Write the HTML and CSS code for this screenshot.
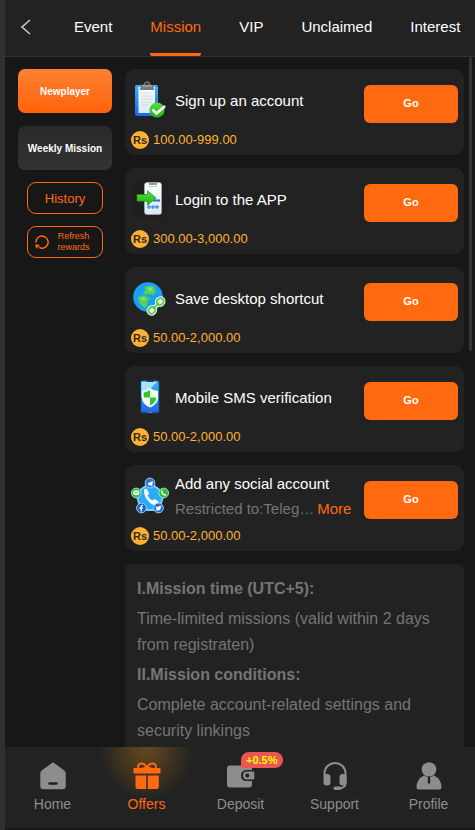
FILE: index.html
```html
<!DOCTYPE html>
<html lang="en">
<head>
<meta charset="utf-8">
<meta name="viewport" content="width=device-width, initial-scale=1">
<title>Mission</title>
<link rel="stylesheet" href="styles.css">
</head>
<body>
<svg class="defs" aria-hidden="true">
  <defs>
    <linearGradient id="board" x1="0" y1="0" x2="0" y2="1"><stop offset="0" stop-color="#35b4fb"/><stop offset="1" stop-color="#2268e8"/></linearGradient>
    <linearGradient id="green" x1="0" y1="0" x2="0" y2="1"><stop offset="0" stop-color="#59df3d"/><stop offset="1" stop-color="#20b515"/></linearGradient>
    <linearGradient id="sheet" x1="0" y1="0" x2="0" y2="1"><stop offset="0" stop-color="#ffffff"/><stop offset="1" stop-color="#dbe8f3"/></linearGradient>
  </defs>
</svg>
<header class="topbar">
  <button class="back" type="button" aria-label="Back"><svg width="12" height="18" viewBox="0 0 12 18"><path d="M10 2 2 9l8 7" fill="none" stroke="#c9c9c9" stroke-width="1.6"/></svg></button>
  <nav class="tabs">
    <a class="tab" href="#">Event</a>
    <a class="tab active" href="#">Mission</a>
    <a class="tab" href="#">VIP</a>
    <a class="tab" href="#">Unclaimed</a>
    <a class="tab" href="#">Interest</a>
  </nav>
</header>
<main class="content">
  <aside class="side">
    <button class="kind selected" type="button">Newplayer</button>
    <button class="kind" type="button">Weekly Mission</button>
    <button class="outline" type="button">History</button>
    <button class="outline refresh" type="button">
      <svg width="14" height="14" viewBox="0 0 14 14" fill="none" stroke="#ff6a10" stroke-width="1.5"><path d="M.9 7.500A6.100 6.100 0 1 1 12.300 10.200 6.100 6.100 0 0 1 4 12.300"/><path d="M.3 9.200l4.700.8L1.200 13.800z" fill="#ff6a10" stroke="none"/></svg>
      <span>Refresh rewards</span>
    </button>
  </aside>
  <section class="missions">
    <article class="card">
      <div class="detail">
        <svg class="icon" viewBox="0 0 38 38">
          <rect x="4" y="4" width="23" height="31" rx="2" fill="url(#board)"/>
          <path d="M7.500 6h16.500v26H7.500z" fill="url(#sheet)"/>
          <path d="M10 12h10M10 15h12M10 18h12M10 21h12M10 24h8" stroke="#c9d0d6" stroke-width=".8"/>
          <circle cx="16" cy="3.500" r="2.500" fill="none" stroke="#777" stroke-width="1.300"/>
          <path d="M10 5q0-1.500 2-1.500h8q2 0 2 1.500l1.500 4h-15z" fill="#747a80"/><path d="M11 5h10" stroke="#b5b9bd"/>
          <circle cx="26" cy="29" r="7.600" fill="url(#green)"/>
          <path d="m21.500 28.500 4 4L34 25" fill="none" stroke="#fff" stroke-width="2.600"/>
        </svg>
        <div class="text"><h2>Sign up an account</h2></div>
      </div>
      <button class="go" type="button">Go</button>
      <p class="reward"><span class="coin">Rs</span>100.00-999.00</p>
    </article>
    <article class="card">
      <div class="detail">
        <svg class="icon" viewBox="0 0 38 38">
          <rect width="38" height="38" rx="5" fill="#1f1f1f"/>
          <rect x="13.500" y="2.500" width="17" height="32" rx="2.500" fill="url(#sheet)" stroke="#aab2ba" stroke-width=".6"/>
          <path d="M18.500 4h7" stroke="#777" stroke-width="1.600" stroke-linecap="round"/><path d="M18 6.500h8" stroke="#bcc4ca"/>
          <path d="M22 20.500h7" stroke="#207fe4" stroke-width="2.200"/>
          <g fill="#fff" stroke="#207fe4" stroke-width="1.200"><circle cx="18" cy="27" r="1.100"/><circle cx="22" cy="27" r="1.100"/><circle cx="26" cy="27" r="1.100"/></g>
          <path d="M6 14.500h10.500v-3.800L25 18l-8.500 7v-3.800H6z" fill="url(#green)" stroke="#16890f" stroke-width=".7"/>
        </svg>
        <div class="text"><h2>Login to the APP</h2></div>
      </div>
      <button class="go" type="button">Go</button>
      <p class="reward"><span class="coin">Rs</span>300.00-3,000.00</p>
    </article>
    <article class="card">
      <div class="detail">
        <svg class="icon" viewBox="0 0 38 38">
          <circle cx="17" cy="18" r="14.800" fill="#19a0f5"/>
          <path d="M14 8q4-2 8-1 3 3 3 6l-3 3-4-1-3 1-3-2 2-3zM7 18l6-2 4 2 2 1-2 3-1 5-2 2-4-3q-3-4-3-8z" fill="#55d05a"/>
          <path d="m16 9 4-1 2 3-3 2zM9 19l4-1 2 2-2 2z" fill="#7fe070"/>
          <g transform="rotate(-46 25 27)"><g fill="#e8ffe4" stroke="#e8ffe4" stroke-width="4"><rect x="15.500" y="24" width="7" height="6" rx="3"/><rect x="27.500" y="24" width="7" height="6" rx="3"/><path d="M20 27h9"/></g><g fill="#e8ffe4" stroke="#5cc455" stroke-width="1.700"><rect x="15.500" y="24" width="7" height="6" rx="3"/><rect x="27.500" y="24" width="7" height="6" rx="3"/><path d="M21 27h8"/></g></g>
        </svg>
        <div class="text"><h2>Save desktop shortcut</h2></div>
      </div>
      <button class="go" type="button">Go</button>
      <p class="reward"><span class="coin">Rs</span>50.00-2,000.00</p>
    </article>
    <article class="card">
      <div class="detail">
        <svg class="icon" viewBox="0 0 38 38">
          <rect x="9.500" y="2" width="19" height="33.500" rx="2.500" fill="#1a4577"/>
          <rect x="10.300" y="3.500" width="17.400" height="30.500" rx="1" fill="url(#board)"/>
          <path d="M10.300 3.500h16L10.300 20z" fill="#a8e4ff"/><path d="M15.500 3h7" stroke="#243849" stroke-width="2"/><path d="M16.500 34.500h5" stroke="#5a7faf"/>
          <path d="M19 10q4 3 8 3v7q0 6-8 9.500-8-3.500-8-9.500v-7q4 0 8-3z" fill="#f5fff1"/>
          <path d="M19 12v7.500h-6.300v-5q3.300-.3 6.300-2.500zM19 19.500h6.300q0 5-6.300 8z" fill="#35c824"/>
        </svg>
        <div class="text"><h2>Mobile SMS verification</h2></div>
      </div>
      <button class="go" type="button">Go</button>
      <p class="reward"><span class="coin">Rs</span>50.00-2,000.00</p>
    </article>
    <article class="card">
      <div class="detail">
        <svg class="icon" viewBox="0 0 38 38">
          <path d="m19 6 14 10-5 17H10L5 16z" fill="#27aaf7" stroke="#75cfff" stroke-width="2" stroke-linejoin="round"/>
          <path d="M13 13q1-2 3-1l2 4q0 1.500-1.500 2.500 2 4 5 5 1.500-2 3-1l3 2q1 2-1 3-3 2-8-2-6-6-5.500-12.500z" fill="#fff"/>
          <g stroke="#b8e5ff" stroke-width=".8"><circle cx="19" cy="6" r="4.900" fill="#2377da"/><circle cx="5.300" cy="16" r="4.900" fill="#32bf31"/><circle cx="32.700" cy="16" r="4.900" fill="#32bf31"/><circle cx="10.500" cy="31" r="4.900" fill="#235fd2"/><circle cx="27.500" cy="31" r="4.900" fill="#2367d7"/></g>
          <path d="m16 6.500 6-2.500-1 5.500-2-1.500-1.500 1V7z" fill="#fff"/>
          <ellipse cx="5.300" cy="15.700" rx="3.200" ry="2.500" fill="#fff"/><path d="M3.500 15.700h3.600" stroke="#32bf31" stroke-width=".8"/>
          <path d="M31 14q-.5 3.500 3.500 4" fill="none" stroke="#fff" stroke-width="1.500" stroke-linecap="round"/>
          <path d="M12 28.500q-1.800-.4-1.800 1.500v4.500M8.500 31h3.300" fill="none" stroke="#fff" stroke-width="1.300"/>
          <path d="m24.500 29 2.500 1.200q.5-1.800 2-1.500l1.700.3-.9 1.200q0 3.500-3.500 3.500l-2-.7 1.300-.5z" fill="#fff"/>
        </svg>
        <div class="text"><h2>Add any social account</h2><p class="limit"><span>Restricted to:Teleg…</span><a href="#">More</a></p></div>
      </div>
      <button class="go" type="button">Go</button>
      <p class="reward"><span class="coin">Rs</span>50.00-2,000.00</p>
    </article>
    <article class="rules">
      <h3>I.Mission time (UTC+5):</h3>
      <p>Time-limited missions (valid within 2 days from registraten)</p>
      <h3>II.Mission conditions:</h3>
      <p>Complete account-related settings and security linkings</p>
    </article>
  </section>
  <div class="thumb"></div>
</main>
<nav class="bottom">
  <a class="item" href="#">
    <svg width="28" height="28" viewBox="0 0 28 28"><path d="M12.500 1.200q1.500-1.200 3 0l9.800 7.300q1.400 1.100 1.400 2.700v13q0 3-3 3H4.300q-3 0-3-3v-13q0-1.600 1.400-2.700z" fill="#8d8d8d"/><path d="M10.500 21.500h7" stroke="#222" stroke-width="2.400" stroke-linecap="round"/></svg>
    <span>Home</span>
  </a>
  <a class="item current" href="#">
    <svg width="28" height="28" viewBox="0 0 28 28"><path d="M14 6Q12 1 8 1.500 4 2.500 5.500 6M14 6q2-5 6-4.500 4 1 2.500 4.500M14 5 9.500 7M14 5l4.500 2" fill="none" stroke="#ff6a10" stroke-width="2"/><path d="M1.500 6h25q1 0 1 1v3.500q0 1-1 1h-25q-1 0-1-1V7q0-1 1-1zM2.500 13.500h10.700V27H5q-2.500 0-2.500-2.500zM14.800 13.500h11v11q0 2.500-2.500 2.500h-8.500z" fill="#ff6a10"/></svg>
    <span>Offers</span>
  </a>
  <a class="item" href="#">
    <svg width="28" height="28" viewBox="0 0 28 28"><path d="M3 3.500h19q3 0 3 3V8h-5q-6 0-6 5.500T20 19h5v3.500q0 3-3 3H3q-3 0-3-3v-16q0-3 3-3z" fill="#8d8d8d"/><path d="M20 9.500h6q1.300 0 1.300 1.300v5.400q0 1.300-1.300 1.300h-6q-4 0-4-4t4-4z" fill="#8d8d8d"/><circle cx="20.300" cy="13.500" r="2" fill="#222"/></svg>
    <span>Deposit</span>
    <b class="badge">+0.5%</b>
  </a>
  <a class="item" href="#">
    <svg width="28" height="28" viewBox="0 0 28 28"><path d="M3.500 14v-2.500a10.500 10.500 0 0 1 21 0V21q0 5-6 5.300" fill="none" stroke="#8d8d8d" stroke-width="2"/><rect x="2.500" y="12" width="7" height="11.500" rx="3.300" fill="#8d8d8d"/><rect x="18.500" y="12" width="7" height="11.500" rx="3.300" fill="#8d8d8d"/><rect x="12.500" y="24.500" width="8" height="3.400" rx="1.700" fill="#8d8d8d"/></svg>
    <span>Support</span>
  </a>
  <a class="item" href="#">
    <svg width="28" height="28" viewBox="0 0 28 28"><circle cx="14" cy="7.500" r="7.300" fill="#8d8d8d"/><path d="M9 13.500q5 3.500 10 0 7.500 3.500 7.500 12 0 2-2 2h-21q-2 0-2-2 0-8.500 7.500-12z" fill="#8d8d8d"/><path d="M13 14.500h2l.3 5.500-1.300 2.500-1.300-2.500z" fill="#222"/></svg>
    <span>Profile</span>
  </a>
</nav>
</body>
</html>
```
FILE: styles.css
```css
* { box-sizing: border-box; }

body {
  margin: 0;
  height: 100vh;
  display: flex;
  flex-direction: column;
  overflow: hidden;
  border-left: 5px solid #303030;
  background: #171717;
  color: #fff;
  font-family: "Liberation Sans", Arial, sans-serif;
  font-size: 15px;
}

h2, h3, p { margin: 0; }
a { color: inherit; text-decoration: none; }
button { padding: 0; border: 0; font-family: inherit; color: inherit; background: none; }
svg { display: block; flex: none; }
.defs { position: absolute; width: 0; height: 0; }

.topbar {
  display: flex;
  flex: none;
  height: 57px;
  background: #222;
  border-bottom: 1px solid #333;
}
.back { display: flex; align-items: center; padding: 0 0 2px 15px; width: 69px; }
.tabs { display: flex; gap: 38px; }
.tab { line-height: 53px; border-bottom: 3px solid transparent; }
.tab.active { color: #ff6a10; border-bottom-color: #ff6a10; border-radius: 2px; }

.content {
  position: relative;
  display: flex;
  gap: 13px;
  flex: 1;
  min-height: 0;
  overflow: hidden;
  padding: 12px 11px 0 13px;
}
.side { width: 94px; flex: none; display: flex; flex-direction: column; align-items: center; gap: 12px; }
.kind {
  width: 100%;
  height: 44px;
  margin-bottom: 1px;
  border-radius: 7px;
  font-size: 10px;
  font-weight: 700;
  background: linear-gradient(#292929, #333);
}
.kind + .kind { margin-bottom: 0; }
.kind.selected { background: linear-gradient(#ff8134, #ff6309); }
.outline {
  width: 76px;
  height: 32px;
  border: 1px solid #ff6a10;
  border-radius: 9px;
  color: #ff6a10;
  font-size: 13px;
}
.refresh { display: flex; align-items: center; padding: 0 7px; font-size: 9px; line-height: 11px; }
.refresh span { flex: 1; padding-left: 3px; }

.missions { flex: 1; min-width: 0; display: flex; flex-direction: column; gap: 13px; }
.card {
  flex: none;
  display: grid;
  grid-template-columns: 1fr 94px;
  row-gap: 6px;
  padding: 6px;
  border-radius: 9px;
  background: #222;
}
.detail { display: flex; align-items: center; gap: 6px; height: 50px; min-width: 0; }
.icon { width: 38px; height: 38px; }
.text { min-width: 0; white-space: nowrap; line-height: 25px; }
.text h2 { font-size: 15px; font-weight: 400; }
.limit { display: flex; gap: 3px; color: #757575; }
.limit a { color: #ff6a10; }
.go { height: 38px; align-self: end; margin-bottom: 2px; padding-bottom: 2px; border-radius: 6px; background: #ff6a10; font-size: 11px; font-weight: 700; }
.reward { grid-column: 1 / -1; display: flex; align-items: center; gap: 4px; height: 18px; font-size: 13px; line-height: 16px; color: #ffb135; }
.coin { width: 18px; height: 18px; border-radius: 50%; background: #ffb135; color: #332817; font-size: 11px; font-weight: 700; line-height: 18px; text-align: center; }

.rules {
  flex: none;
  padding: 12px;
  border-radius: 6px;
  background: #222;
  color: #757575;
  font-size: 16px;
  line-height: 26px;
}
.rules h3 { font-size: 16px; margin-bottom: 4px; }
.rules p { margin-bottom: 4px; }
.thumb { position: absolute; top: 0; right: 3px; width: 3px; height: 294px; border-radius: 2px; background: #333; }

.bottom { display: flex; flex: none; height: 83px; background: #222; border-bottom: 2px solid #191519; }
.item {
  position: relative;
  flex: 1;
  display: flex;
  flex-direction: column;
  align-items: center;
  gap: 4px;
  padding: 15px 0 0 1px;
  font-size: 14px;
  line-height: 20px;
  color: #8d8d8d;
}
.current { color: #ff6a10; background: radial-gradient(ellipse 47px 54px at 50% 0, #644623, #56401f 25%, #222); }
.badge {
  position: absolute;
  top: 5px;
  left: 48px;
  height: 16px;
  padding: 0 5px;
  border-radius: 8px 8px 8px 0;
  background: #ec5555;
  color: #ff0;
  font-size: 11px;
  line-height: 16px;
}
```
